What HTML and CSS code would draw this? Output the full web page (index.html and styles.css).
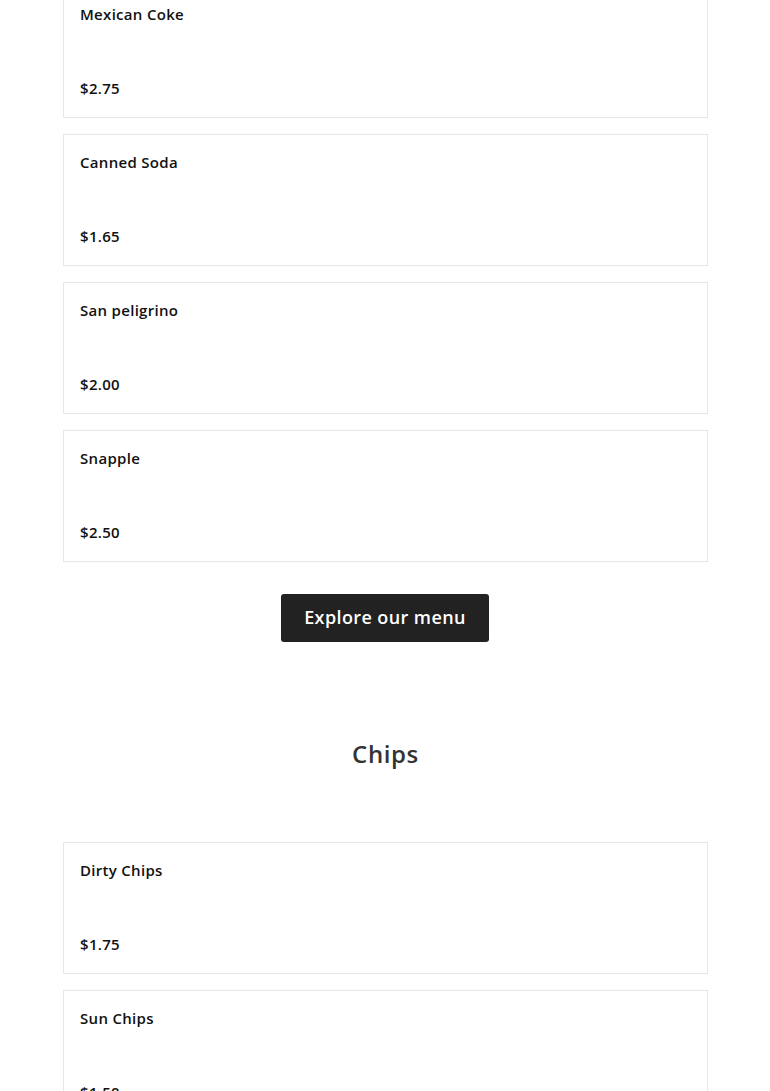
FILE: index.html
```html
<!DOCTYPE html>
<html>
<head>
<meta charset="utf-8">
<link rel="stylesheet" href="styles.css">
</head>
<body>
<div class="page">
  <div class="list first">
    <div class="card"><div class="name">Mexican Coke</div><div class="price">$2.75</div></div>
    <div class="card"><div class="name">Canned Soda</div><div class="price">$1.65</div></div>
    <div class="card"><div class="name">San peligrino</div><div class="price">$2.00</div></div>
    <div class="card"><div class="name">Snapple</div><div class="price">$2.50</div></div>
  </div>
  <div class="cta"><a class="btn">Explore our menu</a></div>
  <h2 class="section-title">Chips</h2>
  <div class="list">
    <div class="card"><div class="name">Dirty Chips</div><div class="price">$1.75</div></div>
    <div class="card"><div class="name">Sun Chips</div><div class="price">$1.50</div></div>
  </div>
</div>
</body>
</html>
```
FILE: styles.css
```css
html, body { margin: 0; padding: 0; background: #fff; }
body { font-family: "Open Sans", "Lato", sans-serif; color: #111; overflow: hidden; height: 1091px; }
.page { padding: 0 62px 0 63px; }
.list { display: flex; flex-direction: column; gap: 16px; }
.list.first { margin-top: -14px; }
.card {
  border: 1px solid #e6e6e6;
  padding: 16px 16px 17px;
  height: 97px;
  display: flex;
  flex-direction: column;
  justify-content: space-between;
}
.name, .price { font-size: 15px; font-weight: 600; line-height: 23px; color: #111; letter-spacing: 0.3px; }
.cta { display: flex; justify-content: center; margin-top: 32px; padding-right: 1px; }
.btn {
  display: block;
  width: 208px; height: 48px;
  box-sizing: border-box;
  background: #222;
  color: #fff;
  border-radius: 3px;
  font-size: 18px; font-weight: 600;
  letter-spacing: 0.4px;
  line-height: 47px;
  text-align: center;
}
.section-title {
  margin: 0;
  padding-top: 97px;
  padding-bottom: 73px;
  text-align: center;
  font-size: 24px; font-weight: 600;
  line-height: 30px;
  color: #333;
  letter-spacing: 0.6px;
}
```
